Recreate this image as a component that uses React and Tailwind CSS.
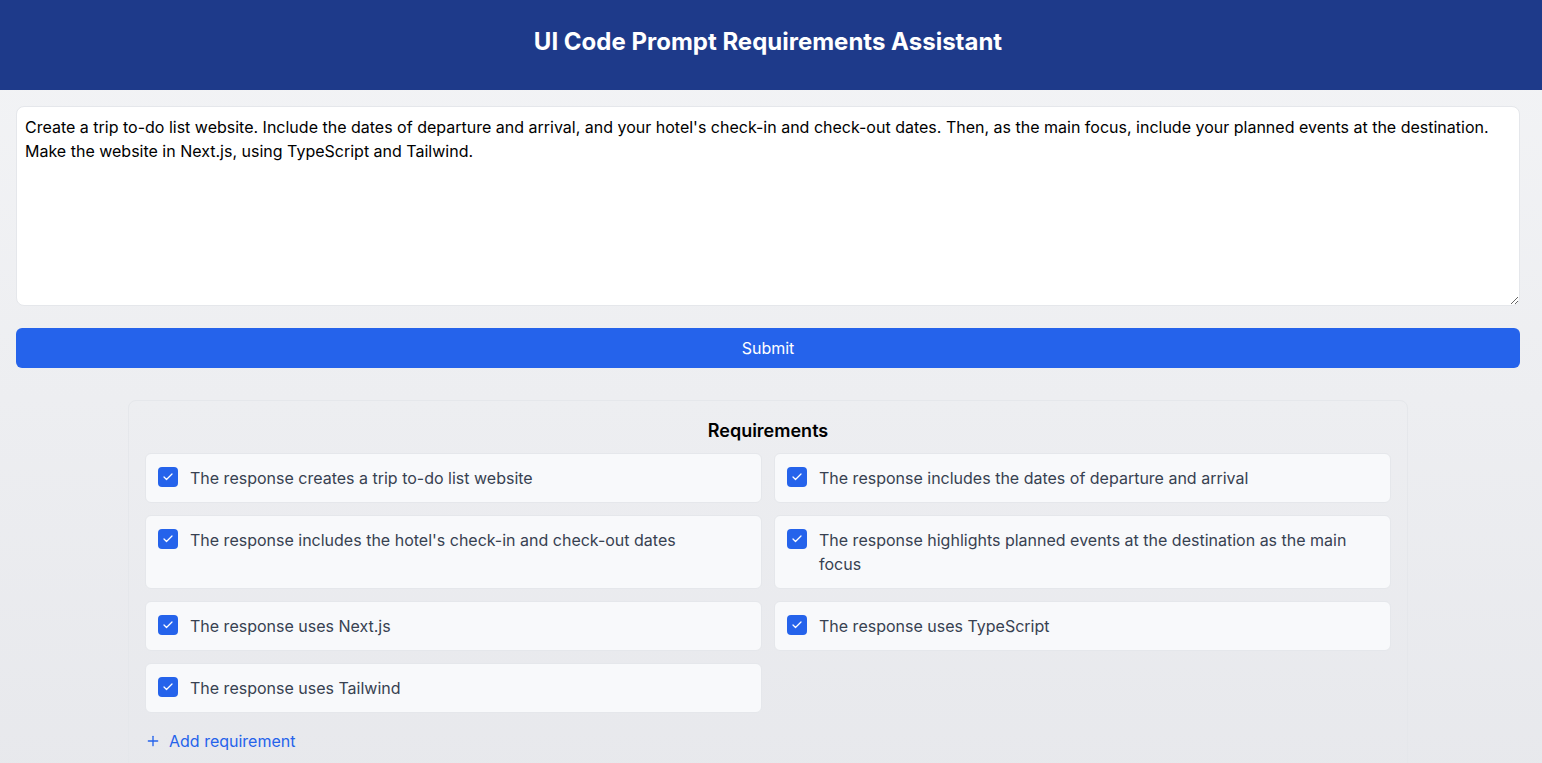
import React from "react";
import { Check, Plus } from "lucide-react";

const reqs = [
  "The response creates a trip to-do list website",
  "The response includes the dates of departure and arrival",
  "The response includes the hotel's check-in and check-out dates",
  "The response highlights planned events at the destination as the main focus",
  "The response uses Next.js",
  "The response uses TypeScript",
  "The response uses Tailwind",
];

export default function App() {
  return (
    <div
      className="min-h-screen w-full bg-gradient-to-b from-[#f3f4f6] to-[#e7e8ec] text-black"
      style={{ fontFamily: "Inter, 'Noto Sans', sans-serif" }}
    >
      <div className="w-full bg-[#1e3a8a]">
        <div className="w-[1536px] h-[90px] flex items-center justify-center pb-[6px]">
          <h1 className="text-2xl font-bold text-white">UI Code Prompt Requirements Assistant</h1>
        </div>
      </div>
      <div className="w-[1536px] px-4 pt-4">
        <textarea
          className="block w-full h-[200px] rounded-lg border border-gray-200 bg-white p-2 text-base leading-6 text-black outline-none"
          defaultValue="Create a trip to-do list website. Include the dates of departure and arrival, and your hotel's check-in and check-out dates. Then, as the main focus, include your planned events at the destination. Make the website in Next.js, using TypeScript and Tailwind."
        />
        <button className="mt-[22px] w-full h-10 rounded-md bg-[#2563eb] text-white text-base">
          Submit
        </button>
        <div className="mt-8 mx-auto w-[1280px] rounded-lg border border-gray-200 p-4 pb-12">
          <h2 className="text-center text-lg font-semibold leading-7 mb-2 text-black">Requirements</h2>
          <div className="grid grid-cols-2 gap-3">
            {reqs.map((r) => (
              <div
                key={r}
                className="flex items-start gap-3 rounded-md border border-gray-200 bg-[#f8f9fb] px-3 py-3"
              >
                <div className="mt-px flex h-5 w-5 shrink-0 items-center justify-center rounded bg-[#2563eb]">
                  <Check className="h-3 w-3 text-white" strokeWidth={2.5} />
                </div>
                <span className="text-base leading-6 text-[#374151]">{r}</span>
              </div>
            ))}
          </div>
          <button className="mt-4 flex items-center gap-2 text-base leading-6 text-[#2563eb]">
            <Plus className="h-4 w-4" strokeWidth={2} />
            Add requirement
          </button>
        </div>
      </div>
    </div>
  );
}
